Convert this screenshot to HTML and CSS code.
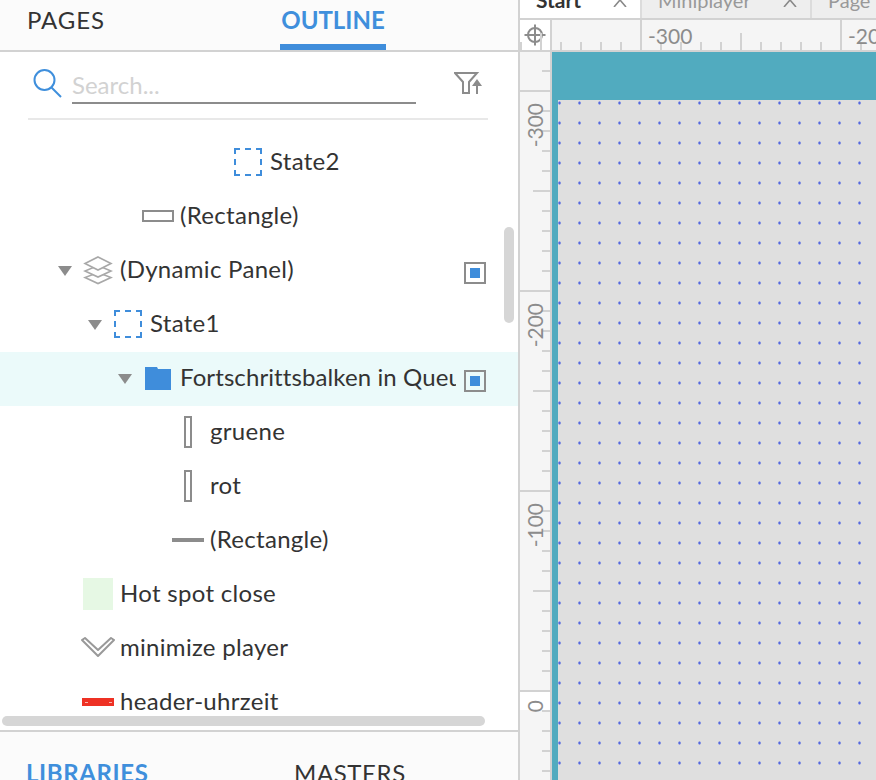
FILE: index.html
```html
<!DOCTYPE html>
<html lang="de">
<head>
<meta charset="utf-8">
<title>Outline</title>
<link rel="stylesheet" href="styles.css">
</head>
<body>
<div class="app">
  <aside class="left">
    <div class="panel-tabs">
      <div class="ptab ptab-pages">PAGES</div>
      <div class="ptab ptab-outline">OUTLINE</div>
    </div>
    <div class="search">
      <svg class="i-search" width="30" height="30" viewBox="0 0 30 30"><circle cx="11.5" cy="11" r="10" fill="none" stroke="#3f8fdc" stroke-width="2"/><path d="M18.5 18.5L28 28" stroke="#3f8fdc" stroke-width="2" fill="none"/></svg>
      <div class="search-field">Search...</div>
      <svg class="i-filter" width="30" height="24" viewBox="0 0 30 24"><path d="M1 1H23L15 10V21H9V10Z" fill="none" stroke="#8c8c8c" stroke-width="2"/><path d="M23 22V12" stroke="#8c8c8c" stroke-width="2"/><path d="M18 14L23 7L28 14Z" fill="#8c8c8c"/></svg>
    </div>
    <div class="tree">
      <div class="row lvl5"><span class="caret none"></span><span class="ico"><span class="dashed"></span></span><span class="label">State2</span></div>
      <div class="row lvl2"><span class="caret none"></span><span class="ico"><span class="rect-h"></span></span><span class="label">(Rectangle)</span></div>
      <div class="row lvl0"><span class="caret"></span><span class="ico"><svg width="30" height="30" viewBox="0 0 30 30"><g fill="none" stroke="#a8a8a8" stroke-width="1.6"><path d="M15 17.5L28 22.5L15 28.5L2 22.5Z"/><path d="M15 10.5L28 16L15 22L2 16Z" fill="#fff"/><path d="M15 2L28 8.5L15 15L2 8.5Z" fill="#fff"/></g></svg></span><span class="label">(Dynamic Panel)</span><span class="check"><span class="check-in"></span></span></div>
      <div class="row lvl1"><span class="caret"></span><span class="ico"><span class="dashed"></span></span><span class="label">State1</span></div>
      <div class="row lvl2 selected"><span class="caret"></span><span class="ico"><svg width="26" height="23" viewBox="0 0 26 23"><path d="M0 0H12L13 2H26V23H0Z" fill="#3f8ddb"/></svg></span><span class="label">Fortschrittsbalken in Queue</span><span class="check"><span class="check-in"></span></span></div>
      <div class="row lvl3"><span class="caret none"></span><span class="ico"><span class="rect-v"></span></span><span class="label">gruene</span></div>
      <div class="row lvl3"><span class="caret none"></span><span class="ico"><span class="rect-v"></span></span><span class="label">rot</span></div>
      <div class="row lvl3"><span class="caret none"></span><span class="ico"><span class="line"></span></span><span class="label">(Rectangle)</span></div>
      <div class="row lvl0"><span class="caret none"></span><span class="ico"><span class="hotspot"></span></span><span class="label">Hot spot close</span></div>
      <div class="row lvl0"><span class="caret none"></span><span class="ico"><svg width="36" height="22" viewBox="0 0 36 22"><path d="M2 3L18 19L34 3L31 1L18 13L5 1Z" fill="#fff" stroke="#999" stroke-width="2" stroke-linejoin="round"/></svg></span><span class="label">minimize player</span></div>
      <div class="row lvl0"><span class="caret none"></span><span class="ico"><span class="redbar"><i></i><i></i></span></span><span class="label">header-uhrzeit</span></div>
      <div class="vscroll"></div>
      <div class="hscroll"></div>
    </div>
    <div class="panel-tabs-bottom">
      <div class="btab btab-lib">LIBRARIES</div>
      <div class="btab">MASTERS</div>
    </div>
  </aside>
  <main class="right">
    <div class="doc-tabs">
      <div class="dtab dtab-active"><span>Start</span><svg width="14" height="8" viewBox="0 0 14 8"><path d="M1 8L7 1L13 8" fill="none" stroke="#888" stroke-width="1.6"/></svg></div>
      <div class="dtab dtab-mini"><span>Miniplayer</span><svg width="14" height="8" viewBox="0 0 14 8"><path d="M1 8L7 1L13 8" fill="none" stroke="#888" stroke-width="1.6"/></svg></div>
      <div class="dtab dtab-page"><span>Page 1</span></div>
    </div>
    <div class="ruler-top">
      <div class="corner"><svg width="28" height="28" viewBox="0 0 28 28"><circle cx="14" cy="14" r="7" fill="none" stroke="#8c8c8c" stroke-width="2"/><path d="M14 3.5V24.5M3.5 14H24.5" stroke="#8c8c8c" stroke-width="2"/></svg></div>
      <div class="hticks">
        <div class="hcell"></div>
        <div class="hcell">-300</div>
        <div class="hcell">-200</div>
      </div>
    </div>
    <div class="stage">
      <div class="vticks">
        <div class="vcell"></div>
        <div class="vcell"><span class="vlabel">-300</span></div>
        <div class="vcell"><span class="vlabel">-200</span></div>
        <div class="vcell"><span class="vlabel">-100</span></div>
        <div class="vcell vcell-zero"><span class="vlabel vlabel-zero">0</span></div>
      </div>
      <div class="canvas">
        <div class="canvas-head"></div>
        <div class="canvas-body"></div>
      </div>
    </div>
  </main>
</div>
</body>
</html>
```
FILE: styles.css
```css
* { box-sizing: border-box; }
html, body { margin: 0; padding: 0; height: 100%; overflow: hidden; }
body { font-family: Lato, "Noto Sans", sans-serif; color: #333; background: #fff; }
.app { display: flex; width: 876px; height: 780px; overflow: hidden; }

.left { width: 520px; flex: none; height: 780px; border-right: 2px solid #d2d2d2; display: flex; flex-direction: column; background: #fff; }
.panel-tabs { height: 52px; flex: none; background: #fbfbfb; border-bottom: 2px solid #d2d2d2; display: flex; font-size: 24px; }
.ptab { height: 50px; line-height: 39px; }
.ptab-pages { width: 280px; padding-left: 27px; letter-spacing: 0.9px; }
.ptab-outline { width: 106px; text-align: center; color: #3f8fdc; font-weight: 700; border-bottom: 6px solid #3f8ddb; }

.search { height: 68px; flex: none; margin: 0 30px 0 28px; border-bottom: 2px solid #e8e8e8; position: relative; display: flex; align-items: flex-start; }
.i-search { margin: 17px 0 0 5px; flex: none; }
.search-field { width: 344px; height: 35px; margin: 17px 0 0 9px; flex: none; border-bottom: 2px solid #8c8c8c; color: #d2d2d2; font-size: 24px; line-height: 32px; }
.i-filter { margin: 20px 0 0 38px; flex: none; }

.tree { flex: 1; min-height: 0; overflow: hidden; position: relative; padding-top: 16px; }
.row { height: 54px; display: flex; align-items: center; padding-right: 32px; font-size: 24px; letter-spacing: 0.3px; }
.lvl0 { padding-left: 50px; }
.lvl1 { padding-left: 80px; }
.lvl2 { padding-left: 110px; }
.lvl3 { padding-left: 140px; }
.lvl5 { padding-left: 200px; }
.selected { background: #ebfafa; letter-spacing: 0.1px; }
.caret { width: 30px; flex: none; display: flex; justify-content: center; }
.caret::before { content: ""; width: 0; height: 0; border-left: 7px solid transparent; border-right: 7px solid transparent; border-top: 10px solid #8c8c8c; }
.caret.none::before { display: none; }
.ico { width: 36px; margin-right: 4px; flex: none; display: flex; align-items: center; justify-content: center; margin-top: -2px; }
.ico svg { display: block; flex: none; }
.label { flex: 1; min-width: 0; white-space: nowrap; overflow: hidden; line-height: 30px; margin-top: -4px; }
.check { width: 22px; height: 22px; margin-left: 8px; margin-top: 4px; flex: none; border: 2px solid #8c8c8c; display: flex; align-items: center; justify-content: center; background: #fff; }
.check-in { width: 10px; height: 10px; background: #3f8ddb; }
.selected .check { background: transparent; }
.dashed { width: 28px; height: 28px; border: 2px dashed #3f8ddb; }
.rect-h { width: 32px; height: 12px; border: 2px solid #8c8c8c; }
.rect-v { width: 8px; height: 32px; border: 2px solid #8c8c8c; }
.line { width: 32px; height: 4px; background: #8c8c8c; }
.hotspot { width: 30px; height: 32px; background: #e6f8e4; }
.redbar { width: 32px; height: 8px; background: #ee3124; display: flex; justify-content: space-between; align-items: center; padding: 0 2px 0 3px; }
.redbar i { width: 3px; height: 1px; background: #f9b5ad; }

.vscroll { position: absolute; left: 504px; top: 107px; width: 10px; height: 96px; border-radius: 5px; background: #d6d6d6; }
.hscroll { position: absolute; left: 2px; top: 596px; width: 483px; height: 10px; border-radius: 5px; background: #d6d6d6; }

.panel-tabs-bottom { height: 50px; flex: none; background: #fbfbfb; border-top: 2px solid #d2d2d2; display: flex; font-size: 24px; line-height: 28px; padding: 27px 0 0 26px; overflow: hidden; }
.btab { white-space: nowrap; letter-spacing: 0.6px; }
.btab-lib { width: 268px; color: #3f8fdc; font-weight: 700; }

.right { flex: 1; min-width: 0; display: flex; flex-direction: column; height: 780px; background: #fff; }
.doc-tabs { height: 20px; flex: none; display: flex; border-bottom: 2px solid #d2d2d2; overflow: hidden; font-size: 20px; background: #eee; }
.dtab { height: 18px; flex: none; padding-left: 16px; display: flex; align-items: flex-end; border-right: 2px solid #dcdcdc; color: #999; white-space: nowrap; }
.dtab span { line-height: 24px; height: 24px; margin-bottom: 6px; }
.dtab svg { display: block; margin-bottom: 11px; }
.dtab-active { width: 122px; background: #fff; color: #333; font-size: 21px; font-weight: 700; justify-content: space-between; padding-right: 13px; }
.dtab-mini { width: 170px; justify-content: space-between; padding-right: 13px; }
.dtab-page { flex: 1; border-right: 0; }

.ruler-top { height: 32px; flex: none; display: flex; border-bottom: 2px solid #d2d2d2; background: #f5f5f5; overflow: hidden; }
.corner { width: 32px; flex: none; background: #fff; border-right: 2px solid #d2d2d2; display: flex; align-items: center; justify-content: center; }
.hticks { flex: 1; min-width: 0; display: flex; overflow: hidden; margin-left: -112px; }
.hcell { width: 200px; height: 30px; flex: none; position: relative; border-left: 2px solid #d2d2d2; padding-left: 6px; color: #8c8c8c; font-size: 21px; line-height: 31px; background: repeating-linear-gradient(90deg, transparent 0 18px, #d2d2d2 18px 20px) left bottom / 100% 8px no-repeat; }
.hcell::after { content: ""; position: absolute; left: 98px; bottom: 0; width: 2px; height: 17px; background: #d2d2d2; }

.stage { flex: 1; min-height: 0; display: flex; }
.vticks { width: 32px; flex: none; border-right: 2px solid #d2d2d2; background: #f5f5f5; overflow: hidden; }
.vcell { width: 30px; height: 200px; position: relative; border-top: 2px solid #d2d2d2; background: repeating-linear-gradient(180deg, transparent 0 18px, #d2d2d2 18px 20px) right top / 8px 100% no-repeat; }
.vcell:first-child { margin-top: -162px; }
.vcell::after { content: ""; position: absolute; top: 98px; right: 0; height: 2px; width: 17px; background: #d2d2d2; }
.vlabel { display: block; writing-mode: vertical-rl; transform: rotate(180deg); width: 30px; padding-bottom: 11px; color: #8c8c8c; font-size: 21px; line-height: 30px; }
.vlabel-zero { padding-bottom: 8px; }
.vcell-zero { background: linear-gradient(#fff, #fff) left top / 30px 18px no-repeat, repeating-linear-gradient(180deg, transparent 0 18px, #d2d2d2 18px 20px) right top / 8px 100% no-repeat; }

.canvas { flex: 1; min-width: 0; display: flex; flex-direction: column; }
.canvas-head { height: 48px; flex: none; background: #51abbf; }
.canvas-body { flex: 1; border-left: 6px solid #51abbf; background-color: #dfdfdf; background-image: radial-gradient(circle at 1.5px 1.5px, #5468e0 1px, rgba(84,104,224,0.25) 1.4px, transparent 1.8px); background-size: 20px 20px; background-position: 0 1.5px; background-origin: padding-box; }
```
